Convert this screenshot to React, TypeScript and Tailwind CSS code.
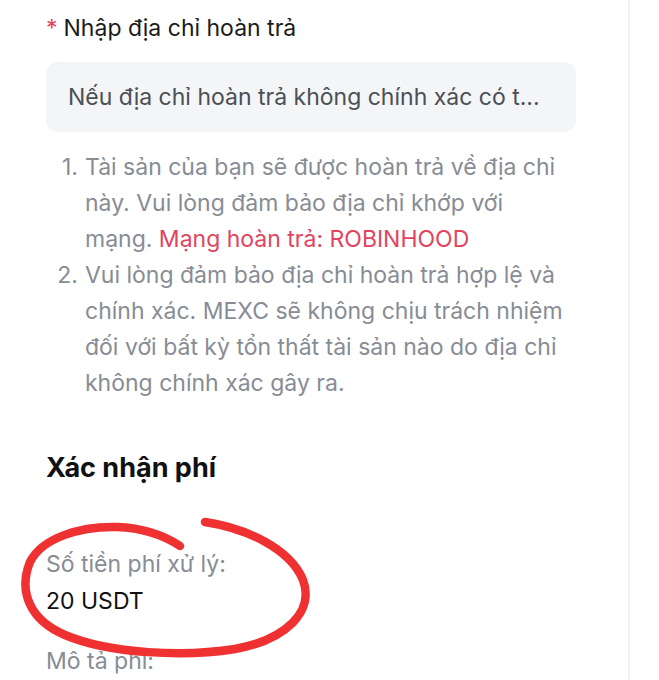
import React from 'react';

const font = { fontFamily: 'Inter, "Noto Sans", sans-serif' };

export default function App() {
    return (
        <div className="flex w-[659px] h-[680px] overflow-hidden bg-white" style={font}>
            <div className="relative w-[630px] shrink-0 border-r-2 border-[#f1f2f4] pl-[46px] pr-[52px] pt-[12px]">
                <div className="text-[23px] leading-[32px] text-[#1b1b1b]">
                    <span className="text-[#e5405e] mr-[6px]">*</span>Nhập địa chỉ hoàn trả
                </div>

                <div className="mt-[18px] h-[70px] rounded-xl bg-[#f4f5f7] px-[22px] flex items-center text-[23px] text-[#4b4f56] whitespace-nowrap">
                    Nếu địa chỉ hoàn trả không chính xác có t...
                </div>

                <ol className="mt-[17px] mr-[6px] text-[23px] leading-[36px] text-[#878c95]">
                    <li className="flex">
                        <span className="w-[39px] shrink-0 text-right pr-[7px]">1.</span>
                        <span>
                            Tài sản của bạn sẽ được hoàn trả về địa chỉ này. Vui lòng đảm bảo địa chỉ khớp với mạng.{' '}
                            <span className="text-[#e2445f]">Mạng hoàn trả: ROBINHOOD</span>
                        </span>
                    </li>
                    <li className="flex">
                        <span className="w-[39px] shrink-0 text-right pr-[7px]">2.</span>
                        <span>
                            Vui lòng đảm bảo địa chỉ hoàn trả hợp lệ và chính xác. MEXC sẽ không chịu trách nhiệm đối với bất kỳ tổn thất tài sản nào do địa chỉ không chính xác gây ra.
                        </span>
                    </li>
                </ol>

                <h2 className="mt-[50px] text-[27px] leading-[34px] font-bold text-[#111]">Xác nhận phí</h2>

                <div className="mt-[63px] text-[23px] leading-[32px] text-[#878c95]">Số tiền phí xử lý:</div>
                <div className="mt-[5px] text-[23px] leading-[32px] text-[#111]">20 USDT</div>

                <div className="mt-[28px] text-[23px] leading-[32px] text-[#878c95]">Mô tả phí:</div>

                <svg className="absolute left-0 top-[500px] pointer-events-none" width="330" height="170" viewBox="0 0 330 170">
                    <path
                        d="M205 22 C245 28 290 48 303 80 C315 112 285 140 235 149 C185 157 110 154 65 135 C30 120 18 92 30 62 C42 38 80 26 117 27 C145 28 165 36 180 46"
                        fill="none"
                        stroke="#ef3131"
                        strokeWidth="8.5"
                        strokeLinecap="round"
                    />
                </svg>
            </div>
            <div className="flex-1 bg-white" />
        </div>
    );
}
